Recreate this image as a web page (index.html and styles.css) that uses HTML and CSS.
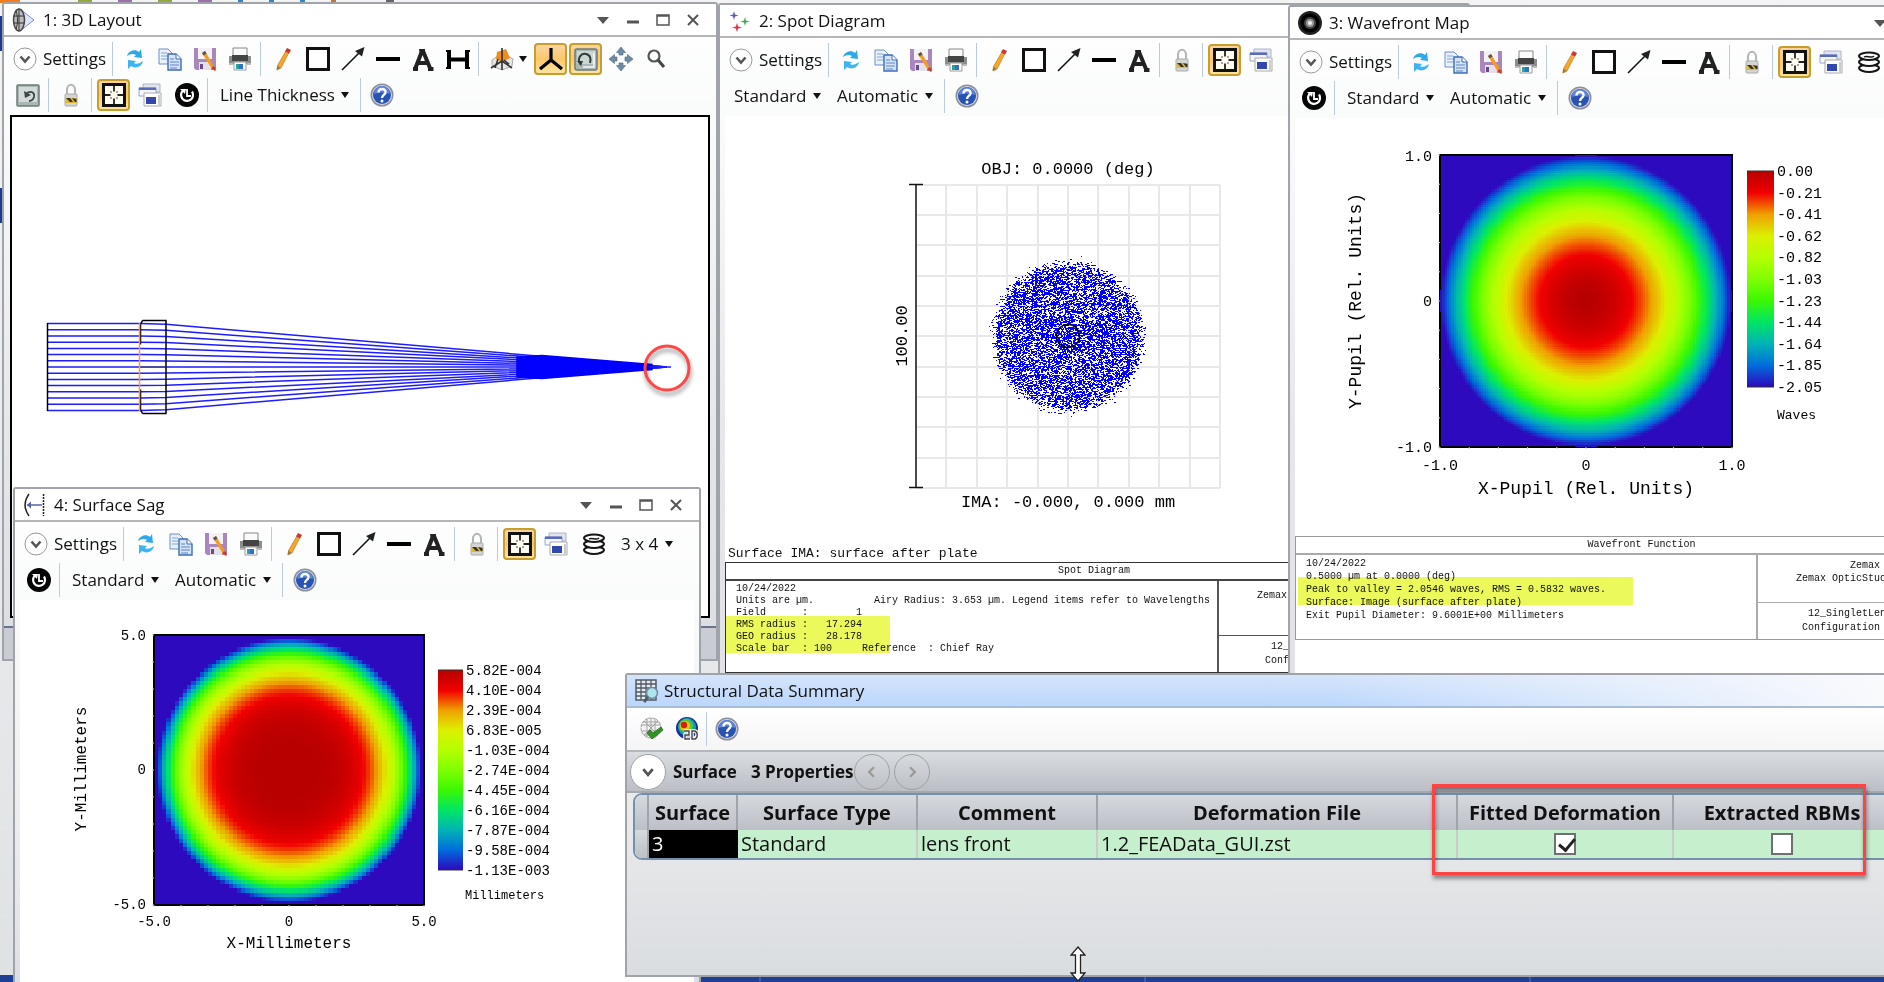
FILE: index.html
```html
<!DOCTYPE html>
<html lang="en">
<head>
    <meta charset="UTF-8">
    <title>OpticStudio</title>
    <link rel="stylesheet" href="styles.css">
</head>
<body>
<svg class="sprite" aria-hidden="true">
    <symbol id="i-chevron" viewBox="0 0 24 24"><circle cx="12" cy="12" r="11" fill="#fff" stroke="#999"/><path d="M7.5 9.5l4.5 5 4.5-5" fill="none" stroke="#555" stroke-width="2.6"/></symbol>
    <symbol id="i-refresh" viewBox="0 0 24 24"><path d="M4 9c1-5 8-8 12-4l2-3 1 9-8-1 2-2c-3-2-6-1-9 1z" fill="#2fa8ea"/><path d="M20 14c-1 6-8 8-12 5l-3 3V13l8 1-2 2c3 2 6 0 9-2z" fill="#3db5f2"/></symbol>
    <symbol id="i-copy" viewBox="0 0 24 24"><path d="M1 2h9l4 4v11H1z" fill="#eaf1fb" stroke="#6b8fc9"/><path d="M3 6h6M3 9h8M3 12h8" stroke="#7ea3d8"/><path d="M10 7h8l5 5v11H10z" fill="#d5e4f8" stroke="#3d6cb5" stroke-width="1.4"/><path d="M18 7v5h5" fill="#fff" stroke="#3d6cb5"/><path d="M12 12h4M12 15h9M12 18h9M12 21h7" stroke="#5a86c8"/></symbol>
    <symbol id="i-save" viewBox="0 0 24 24"><path d="M1 1h22v22H3l-2-2z" fill="#a987bd"/><path d="M5 1h14v11H5z" fill="#f3f1f6"/><path d="M6 15h12v8H6z" fill="#e4e0ea"/><path d="M7 17h3v5H7z" fill="#6b4a86"/><path d="M9 6l3-2 10 17v3l-3-2z" fill="#f59a22"/><path d="M9 6l3-2 1.500 2.500-3 2z" fill="#555"/><path d="M20 19l2.500 1.500v3.500l-4-2.500z" fill="#cf3a2c"/></symbol>
    <symbol id="i-print" viewBox="0 0 24 24"><path d="M5 1h14v9H5z" fill="#fafafa" stroke="#888"/><path d="M1 9h22v8H1z" fill="#8b8d8f"/><path d="M4 8h16v6H4z" fill="#444"/><path d="M6 15h12v8H6z" fill="#fff" stroke="#999"/><path d="M8 17h3v5H8z" fill="#2aa39c"/><path d="M11 17h4v5h-4z" fill="#2f6fd0"/><path d="M1 16h4v2H1zM19 16h4v2h-4z" fill="#bbb"/></symbol>
    <symbol id="i-pencil" viewBox="0 0 24 24"><path d="M16 2l3 1.500-9 17.500-4 2 .5-4.500z" fill="#f5a62c" stroke="#c77d17" stroke-width=".7"/><path d="M16 1l4 2-2 3.500-4-2z" fill="#cc3b33"/><path d="M6.500 18.500l3 2.500-4 2z" fill="#8d7a5a"/></symbol>
    <symbol id="i-rect" viewBox="0 0 24 24"><path d="M1.500 1.500h21v21h-21z" fill="#fff" stroke="#111" stroke-width="3"/></symbol>
    <symbol id="i-arrow" viewBox="0 0 24 24"><path d="M1 23L19 5" stroke="#111" stroke-width="1.600"/><path d="M23.500 0l-2.500 9.500-7-5.500z" fill="#222"/></symbol>
    <symbol id="i-line" viewBox="0 0 24 24"><path d="M0 12h24" stroke="#000" stroke-width="4"/></symbol>
    <symbol id="i-letter" viewBox="0 0 24 24"><path d="M2 22h5M17 22h5.500M4.500 21L11 4M12 4l7 17M7.500 16h9" stroke="#222" stroke-width="4" fill="none"/><path d="M8 2h6v5H9z" fill="#222"/></symbol>
    <symbol id="i-span" viewBox="0 0 24 24"><path d="M3 3v19M21 3v19M3 12.500h18" stroke="#000" stroke-width="4"/><path d="M0 4h5M0 21h5M19 4h5M19 21h5" stroke="#000" stroke-width="2"/></symbol>
    <symbol id="i-camera" viewBox="0 0 24 24"><path d="M2 13l10-7 11 6-1 7-10 4-10-4z" fill="#e6e6e6" stroke="#aaa"/><path d="M7 5l9-3 4 9-8 4-6-3z" fill="#ee8c1e"/><path d="M12 1v13M12 14L1 21M12 14l10 7M8 12l-3 9M14 13l5 4M12 14v9" stroke="#333" stroke-width="1.600" fill="none"/></symbol>
    <symbol id="i-axes" viewBox="0 0 24 24"><path d="M12 1v12M12 13L1 22M12 13l11 9" stroke="#000" stroke-width="3.200" fill="none"/></symbol>
    <symbol id="i-orbit" viewBox="0 0 24 24"><rect x="1" y="2" width="22" height="21" rx="2" fill="#a9b7b5" stroke="#6d7b7a" stroke-width="1.500"/><path d="M3 4h18v13H3z" fill="#cbd5d2"/><path d="M6 17C3 11 7 6 12 7c5 1 5 6 4 9" fill="none" stroke="#2e3c3b" stroke-width="2"/><path d="M20 6v14H9" stroke="#f6f8f8" stroke-width="1.500" fill="none"/><path d="M3 14l4 5 2-5z" fill="#2e3c3b"/></symbol>
    <symbol id="i-undo" viewBox="0 0 24 24"><rect x="1" y="2" width="22" height="21" rx="1" fill="#a9b7b5" stroke="#6d7b7a" stroke-width="1.500"/><path d="M3 4h18v15H3z" fill="#d3dbd8"/><path d="M10 11c4-4 9-2 8 3-1 3-3 4-5 4" fill="none" stroke="#394645" stroke-width="1.800"/><path d="M8 8l1 7 6-3z" fill="#394645"/></symbol>
    <symbol id="i-move" viewBox="0 0 24 24"><g fill="#6d8ba3" stroke="#4d6a82" stroke-width=".6"><path d="M12 0l4.500 5.500H14v2.500h-4V5.500H7.500z"/><path d="M12 24l4.500-5.500H14V16h-4v2.500H7.500z"/><path d="M0 12l5.500-4.500V10H8v4H5.500v2.500z"/><path d="M24 12l-5.500-4.500V10H16v4h2.500v2.500z"/></g></symbol>
    <symbol id="i-zoom" viewBox="0 0 24 24"><circle cx="10" cy="9" r="5.500" fill="none" stroke="#555" stroke-width="2.200"/><path d="M14 13l6 7" stroke="#444" stroke-width="3"/></symbol>
    <symbol id="i-lock" viewBox="0 0 24 24"><path d="M8 12V7c0-7 8-7 8 0v5" fill="none" stroke="#b5b5b5" stroke-width="2"/><rect x="6" y="11" width="12" height="12" rx="1" fill="#d4d4d0" stroke="#aaa"/><path d="M6.500 15h11v5h-11z" fill="#e0b92e"/><path d="M7 15l4 4h3l-3-4zM13 15l3 4h1.500v-3z" fill="#333"/></symbol>
    <symbol id="i-fit" viewBox="0 0 24 24"><path d="M1.500 1.500h21v21h-21z" fill="#fdfaf0" stroke="#111" stroke-width="3"/><path d="M12 3v5.500M12 15.500V21M3 12h5.500M15.500 12H21" stroke="#222" stroke-width="1.800"/><path d="M8 8h2v2H8zM14 8h2v2h-2zM8 14h2v2H8zM14 14h2v2h-2z" fill="#aaa59a"/></symbol>
    <symbol id="i-windows" viewBox="0 0 24 24"><path d="M5 1h17v8H5z" fill="#e1e4ec" stroke="#aeb6c8"/><path d="M1 5h17v8H1z" fill="#f5f6f9" stroke="#9aa6c8"/><path d="M1 4.500h17v2.500H1z" fill="#5a6bbc"/><path d="M6 10h17v13H6z" fill="#fff" stroke="#aaa"/><path d="M8 14h10v7H8z" fill="#3348ae"/><path d="M20 12h2v10h-2z" fill="#ccc"/></symbol>
    <symbol id="i-clock" viewBox="0 0 24 24"><circle cx="12" cy="12" r="12" fill="#050505"/><path d="M8 7.500a6 6 0 1 0 9 1" fill="none" stroke="#fff" stroke-width="2.200"/><path d="M12 6v7h4" stroke="#fff" stroke-width="1.800" fill="none"/><path d="M5 6l6 0-1 5z" fill="#fff"/></symbol>
    <symbol id="i-layers" viewBox="0 0 24 24"><g fill="#fff" stroke="#151515" stroke-width="2"><path d="M12 14.500c5 0 10 1.500 10 3.500s-5 4-10 4-10-2-10-4 5-3.500 10-3.500z"/><path d="M12 8.500c5 0 10 1.500 10 3.500s-5 4-10 4-10-2-10-4 5-3.500 10-3.500z"/><path d="M12 2.500c5 0 10 1.500 10 3.500s-5 4-10 4S2 8 2 6s5-3.500 10-3.500z"/></g><path d="M7 7c3-2 7 2 10-1" fill="none" stroke="#151515" stroke-width="1.500"/></symbol>
    <symbol id="i-help" viewBox="0 0 24 24"><circle cx="12" cy="12" r="11.500" fill="#8b8f99"/><circle cx="12" cy="12" r="10" fill="#d4d9e4"/><circle cx="12" cy="12" r="9" fill="#2853b5"/><path d="M4 11a8 8 0 0 1 16 0c-5-2-10-2-16 0z" fill="#5f86d8"/><path d="M8.500 9.500c0-5 7.500-4.500 7 0-.4 2.500-3.500 2.500-3.500 5.500" fill="none" stroke="#fff" stroke-width="2.400"/><circle cx="12" cy="18" r="1.500" fill="#fff"/></symbol>
    <symbol id="i-lens" viewBox="0 0 24 24"><path d="M8 1l14 11L8 23z" fill="#dfe6fa" stroke="#7c8cd6"/><ellipse cx="7" cy="12" rx="5.500" ry="11" fill="#bdbdbd" stroke="#444" stroke-width="1.500"/><path d="M7 1v22M2 8h10M2 15h10M4 3c2 6 2 12 0 18" stroke="#333" fill="none"/></symbol>
    <symbol id="i-spots" viewBox="0 0 24 24"><path d="M6 2l1 3.500 3.500 1-3.500 1L6 11 5 7.500l-3.500-1 3.500-1z" fill="#5560ad"/><path d="M17 8l1 3.500 3.500 1-3.500 1-1 3.500-1-3.500-3.500-1 3.500-1z" fill="#3cae55"/><path d="M9 14l1.200 3.500 3.800 1-3.800 1L9 23l-1.200-3.500-3.800-1 3.800-1z" fill="#e8344a"/></symbol>
    <symbol id="i-wave" viewBox="0 0 24 24"><circle cx="12" cy="12" r="12" fill="#222"/><circle cx="12" cy="12" r="9.500" fill="#000"/><circle cx="12" cy="12" r="6" fill="#444"/><circle cx="12" cy="12" r="4" fill="#999"/><circle cx="12" cy="12" r="2" fill="#eee"/></symbol>
    <symbol id="i-sag" viewBox="0 0 24 24"><path d="M6 1c-5 7-5 15 0 22" fill="none" stroke="#222" stroke-width="1.500"/><path d="M4 12h15" stroke="#5661b0" stroke-width="1.500"/><path d="M8 8.500L4 12l4 3.500" fill="#5661b0"/><path d="M20.500 1v22" stroke="#222" stroke-width="1.500" stroke-dasharray="2 1"/></symbol>
    <symbol id="i-sheet" viewBox="0 0 24 24"><path d="M1 1h20v20H1z" fill="#e7ebf0" stroke="#4f5a66" stroke-width="1.500"/><path d="M1 5h20M1 9h20M1 13h20M1 17h20M6 1v20M11 1v20M16 1v20" stroke="#4f5a66" stroke-width="1.300"/><circle cx="17" cy="14" r="5.500" fill="#aee3f0" stroke="#6f8c9c" stroke-width="1.500"/><path d="M13 18l-4 5" stroke="#49606e" stroke-width="3"/></symbol>
    <symbol id="i-mesh" viewBox="0 0 24 24"><circle cx="11" cy="11" r="10" fill="#f2f2f2" stroke="#999" stroke-dasharray="3 1"/><path d="M1 8h20M1 14h20M3 5h16M4 18h14M7 1v20M15 1v20M11 1v20M4 4l14 14M18 4L4 18" stroke="#a5a5a5" fill="none"/><path d="M7 16l5 6 11-9-2-3-8 6-3-3z" fill="#2f9422" stroke="#15610f" stroke-width=".7"/></symbol>
    <symbol id="i-map2d" viewBox="0 0 24 24"><circle cx="12" cy="11" r="11" fill="#1c2e9c"/><circle cx="12" cy="10" r="9" fill="#11a0b8"/><circle cx="11" cy="9" r="7" fill="#59c929"/><circle cx="10" cy="9" r="5" fill="#efc213"/><circle cx="9" cy="8" r="3.200" fill="#c8260e"/><path d="M9 14h5v4h-4v4h5M17 14v8h3c3-1 3-7 0-8z" fill="none" stroke="#fff" stroke-width="3.500"/><path d="M9 14h5v4h-4v4h5M17 14v8h3c3-1 3-7 0-8z" fill="none" stroke="#444" stroke-width="1.400"/></symbol>
</svg>

<main class="desktop">
    <div class="ribbon" aria-hidden="true"><i class="file"></i><i class="green"></i><i class="purple"></i><i class="green"></i><i class="purple"></i><i class="blue"></i><i class="blue"></i><i class="blue"></i><i class="orange"></i><i class="grey"></i></div>
    <div class="edge" aria-hidden="true"></div>
    <div class="edge lower" aria-hidden="true"></div>
    <div class="footer" aria-hidden="true"><i></i><i></i><i></i></div>

    <!-- 1: layout -->
    <section class="window win-layout">
        <header class="titlebar">
            <svg class="icon"><use href="#i-lens"/></svg>
            <h2>1: 3D Layout</h2>
            <button class="ctl" aria-label="Window menu"><svg viewBox="0 0 16 16"><path d="M2 5h12l-6 7z" fill="#555"/></svg></button>
            <button class="ctl" aria-label="Minimize"><svg viewBox="0 0 16 16"><path d="M2 10h12" stroke="#555" stroke-width="3"/></svg></button>
            <button class="ctl" aria-label="Maximize"><svg viewBox="0 0 16 16"><path d="M2 3h12v10H2zM2 4h12" fill="none" stroke="#555" stroke-width="1.500"/></svg></button>
            <button class="ctl" aria-label="Close"><svg viewBox="0 0 16 16"><path d="M3 3l10 10M13 3L3 13" stroke="#555" stroke-width="2"/></svg></button>
        </header>
        <div class="toolbar">
            <div class="row">
                <button class="settings"><svg class="icon"><use href="#i-chevron"/></svg>Settings</button>
                <span class="sep"></span>
                <button class="tool" aria-label="Refresh"><svg class="icon"><use href="#i-refresh"/></svg></button>
                <button class="tool" aria-label="Copy"><svg class="icon"><use href="#i-copy"/></svg></button>
                <button class="tool" aria-label="Save"><svg class="icon"><use href="#i-save"/></svg></button>
                <button class="tool" aria-label="Print"><svg class="icon"><use href="#i-print"/></svg></button>
                <span class="sep"></span>
                <button class="tool" aria-label="Annotate"><svg class="icon"><use href="#i-pencil"/></svg></button>
                <button class="tool" aria-label="Rectangle"><svg class="icon"><use href="#i-rect"/></svg></button>
                <button class="tool" aria-label="Arrow"><svg class="icon"><use href="#i-arrow"/></svg></button>
                <button class="tool" aria-label="Line"><svg class="icon"><use href="#i-line"/></svg></button>
                <button class="tool" aria-label="Text"><svg class="icon"><use href="#i-letter"/></svg></button>
                <button class="tool" aria-label="Measure"><svg class="icon"><use href="#i-span"/></svg></button>
                <span class="sep"></span>
                <button class="tool split" aria-label="View plane"><svg class="icon"><use href="#i-camera"/></svg><b class="caret"></b></button>
                <button class="tool on" aria-label="Show axes"><svg class="icon"><use href="#i-axes"/></svg></button>
                <button class="tool on" aria-label="Rotate"><svg class="icon"><use href="#i-orbit"/></svg></button>
                <button class="tool" aria-label="Pan"><svg class="icon"><use href="#i-move"/></svg></button>
                <button class="tool" aria-label="Zoom"><svg class="icon"><use href="#i-zoom"/></svg></button>
            </div>
            <div class="row">
                <button class="tool" aria-label="Reset view"><svg class="icon"><use href="#i-undo"/></svg></button>
                <span class="sep"></span>
                <button class="tool" aria-label="Lock"><svg class="icon"><use href="#i-lock"/></svg></button>
                <span class="sep"></span>
                <button class="tool on" aria-label="Fit"><svg class="icon"><use href="#i-fit"/></svg></button>
                <button class="tool wide" aria-label="Clone"><svg class="icon"><use href="#i-windows"/></svg></button>
                <button class="tool" aria-label="Auto update"><svg class="icon"><use href="#i-clock"/></svg></button>
                <span class="sep"></span>
                <button class="menu">Line Thickness<b class="caret"></b></button>
                <span class="sep"></span>
                <button class="tool" aria-label="Help"><svg class="icon"><use href="#i-help"/></svg></button>
            </div>
        </div>
        <div class="view framed">
            <svg class="plot" width="696" height="499">
                <g id="rays" fill="none" stroke="#1c1cff" stroke-width="1.500"></g>
                <path d="M35.500 206v88" stroke="#000" stroke-width="1.500"/>
                <path d="M130.500 203.500h23.500v93h-23.500M154 203v94M130.500 203.500l-2 4v20M130.500 296.500l-2-4v-20" fill="none" stroke="#000" stroke-width="1.500"/>
                <path d="M127 250h27" stroke="#444"/>
                <path d="M127.500 206v88" stroke="#ff9640" stroke-width="1.500"/>
                <circle class="callout" cx="655" cy="251" r="22"/>
            </svg>
        </div>
        <div class="status"></div>
    </section>

    <!-- 2: spot diagram -->
    <section class="window win-spot">
        <header class="titlebar">
            <svg class="icon"><use href="#i-spots"/></svg>
            <h2>2: Spot Diagram</h2>
        </header>
        <div class="toolbar">
            <div class="row">
                <button class="settings"><svg class="icon"><use href="#i-chevron"/></svg>Settings</button>
                <span class="sep"></span>
                <button class="tool" aria-label="Refresh"><svg class="icon"><use href="#i-refresh"/></svg></button>
                <button class="tool" aria-label="Copy"><svg class="icon"><use href="#i-copy"/></svg></button>
                <button class="tool" aria-label="Save"><svg class="icon"><use href="#i-save"/></svg></button>
                <button class="tool" aria-label="Print"><svg class="icon"><use href="#i-print"/></svg></button>
                <span class="sep"></span>
                <button class="tool" aria-label="Annotate"><svg class="icon"><use href="#i-pencil"/></svg></button>
                <button class="tool" aria-label="Rectangle"><svg class="icon"><use href="#i-rect"/></svg></button>
                <button class="tool" aria-label="Arrow"><svg class="icon"><use href="#i-arrow"/></svg></button>
                <button class="tool" aria-label="Line"><svg class="icon"><use href="#i-line"/></svg></button>
                <button class="tool" aria-label="Text"><svg class="icon"><use href="#i-letter"/></svg></button>
                <span class="sep"></span>
                <button class="tool" aria-label="Lock"><svg class="icon"><use href="#i-lock"/></svg></button>
                <span class="sep"></span>
                <button class="tool on" aria-label="Fit"><svg class="icon"><use href="#i-fit"/></svg></button>
                <button class="tool wide" aria-label="Clone"><svg class="icon"><use href="#i-windows"/></svg></button>
            </div>
            <div class="row">
                <label class="menu"><select aria-label="Style"><option>Standard</option></select><b class="caret"></b></label>
                <label class="menu"><select aria-label="Scale"><option>Automatic</option></select><b class="caret"></b></label>
                <span class="sep"></span>
                <button class="tool" aria-label="Help"><svg class="icon"><use href="#i-help"/></svg></button>
            </div>
        </div>
        <div class="view">
            <svg class="plot" width="738" height="430">
                <path d="M191 69h304M191 99h304M191 129h304M191 160h304M191 190h304M191 220h304M191 251h304M191 281h304M191 311h304M191 342h304M191 372h304M221 69v303M252 69v303M282 69v303M313 69v303M343 69v303M373 69v303M404 69v303M434 69v303M465 69v303M495 69v303" fill="none" stroke="#e8e8e8" stroke-width="2"/>
                <path d="M191 68v304M184 68.500h14M184 371.500h14" fill="none" stroke="#111" stroke-width="1.500"/>
                <path id="spots" fill="#00f" shape-rendering="crispEdges"/>
                <circle cx="343" cy="220" r="11.500" fill="none" stroke="#000" stroke-width="1.500"/>
                <g class="t17" text-anchor="middle">
                    <text x="343" y="58">OBJ: 0.0000 (deg)</text>
                    <text x="343" y="391">IMA: -0.000, 0.000 mm</text>
                    <text transform="translate(182 220) rotate(-90)">100.00</text>
                </g>
            </svg>
            <p class="surface">Surface IMA: surface after plate</p>
            <div class="report spot">
                <h3>Spot Diagram</h3>
                <pre class="left">10/24/2022
Units are µm.          Airy Radius: 3.653 µm. Legend items refer to Wavelengths
Field      :        1
RMS radius :   17.294
GEO radius :   28.178
Scale bar  : 100     Reference  : Chief Ray</pre>
                <pre class="top">
Zemax</pre>
                <pre class="bottom"> 12_
Conf</pre>
                <span class="marker"></span>
            </div>
        </div>
    </section>

    <!-- 3: wavefront map -->
    <section class="window win-wave">
        <header class="titlebar">
            <svg class="icon"><use href="#i-wave"/></svg>
            <h2>3: Wavefront Map</h2>
            <button class="ctl" aria-label="Window menu"><svg viewBox="0 0 16 16"><path d="M2 5h12l-6 7z" fill="#555"/></svg></button>
            <span class="ctl"></span><span class="ctl"></span><span class="ctl"></span>
        </header>
        <div class="toolbar">
            <div class="row">
                <button class="settings"><svg class="icon"><use href="#i-chevron"/></svg>Settings</button>
                <span class="sep"></span>
                <button class="tool" aria-label="Refresh"><svg class="icon"><use href="#i-refresh"/></svg></button>
                <button class="tool" aria-label="Copy"><svg class="icon"><use href="#i-copy"/></svg></button>
                <button class="tool" aria-label="Save"><svg class="icon"><use href="#i-save"/></svg></button>
                <button class="tool" aria-label="Print"><svg class="icon"><use href="#i-print"/></svg></button>
                <span class="sep"></span>
                <button class="tool" aria-label="Annotate"><svg class="icon"><use href="#i-pencil"/></svg></button>
                <button class="tool" aria-label="Rectangle"><svg class="icon"><use href="#i-rect"/></svg></button>
                <button class="tool" aria-label="Arrow"><svg class="icon"><use href="#i-arrow"/></svg></button>
                <button class="tool" aria-label="Line"><svg class="icon"><use href="#i-line"/></svg></button>
                <button class="tool" aria-label="Text"><svg class="icon"><use href="#i-letter"/></svg></button>
                <span class="sep"></span>
                <button class="tool" aria-label="Lock"><svg class="icon"><use href="#i-lock"/></svg></button>
                <span class="sep"></span>
                <button class="tool on" aria-label="Fit"><svg class="icon"><use href="#i-fit"/></svg></button>
                <button class="tool wide" aria-label="Clone"><svg class="icon"><use href="#i-windows"/></svg></button>
                <button class="tool wide" aria-label="Layers"><svg class="icon"><use href="#i-layers"/></svg></button>
            </div>
            <div class="row">
                <button class="tool" aria-label="Auto update"><svg class="icon"><use href="#i-clock"/></svg></button>
                <span class="sep"></span>
                <label class="menu"><select aria-label="Style"><option>Standard</option></select><b class="caret"></b></label>
                <label class="menu"><select aria-label="Scale"><option>Automatic</option></select><b class="caret"></b></label>
                <span class="sep"></span>
                <button class="tool" aria-label="Help"><svg class="icon"><use href="#i-help"/></svg></button>
            </div>
        </div>
        <div class="view">
            <svg class="plot" width="692" height="418">
                <g id="waveMap"></g>
                <g id="waveBar" class="t15"></g>
                <g class="t15" text-anchor="end">
                    <text x="137" y="43">1.0</text>
                    <text x="137" y="188">0</text>
                    <text x="137" y="334">-1.0</text>
                </g>
                <g class="t15" text-anchor="middle">
                    <text x="145" y="352">-1.0</text>
                    <text x="291" y="352">0</text>
                    <text x="437" y="352">1.0</text>
                </g>
                <g class="t18" text-anchor="middle">
                    <text x="291" y="376">X-Pupil (Rel. Units)</text>
                    <text transform="translate(66 183) rotate(-90)">Y-Pupil (Rel. Units)</text>
                </g>
                <text class="t13" x="482" y="301">Waves</text>
            </svg>
            <div class="report wave">
                <h3>Wavefront Function</h3>
                <pre class="left">10/24/2022
0.5000 µm at 0.0000 (deg)
Peak to valley = 2.0546 waves, RMS = 0.5832 waves.
Surface: Image (surface after plate)
Exit Pupil Diameter: 9.6001E+00 Millimeters</pre>
                <pre class="top">         Zemax
Zemax OpticStudio</pre>
                <pre class="bottom"> 12_SingletLens
Configuration 1 of 1</pre>
                <span class="marker"></span>
            </div>
        </div>
    </section>

    <!-- 4: surface sag -->
    <section class="window win-sag">
        <header class="titlebar">
            <svg class="icon"><use href="#i-sag"/></svg>
            <h2>4: Surface Sag</h2>
            <button class="ctl" aria-label="Window menu"><svg viewBox="0 0 16 16"><path d="M2 5h12l-6 7z" fill="#555"/></svg></button>
            <button class="ctl" aria-label="Minimize"><svg viewBox="0 0 16 16"><path d="M2 10h12" stroke="#555" stroke-width="3"/></svg></button>
            <button class="ctl" aria-label="Maximize"><svg viewBox="0 0 16 16"><path d="M2 3h12v10H2zM2 4h12" fill="none" stroke="#555" stroke-width="1.500"/></svg></button>
            <button class="ctl" aria-label="Close"><svg viewBox="0 0 16 16"><path d="M3 3l10 10M13 3L3 13" stroke="#555" stroke-width="2"/></svg></button>
        </header>
        <div class="toolbar">
            <div class="row">
                <button class="settings"><svg class="icon"><use href="#i-chevron"/></svg>Settings</button>
                <span class="sep"></span>
                <button class="tool" aria-label="Refresh"><svg class="icon"><use href="#i-refresh"/></svg></button>
                <button class="tool" aria-label="Copy"><svg class="icon"><use href="#i-copy"/></svg></button>
                <button class="tool" aria-label="Save"><svg class="icon"><use href="#i-save"/></svg></button>
                <button class="tool" aria-label="Print"><svg class="icon"><use href="#i-print"/></svg></button>
                <span class="sep"></span>
                <button class="tool" aria-label="Annotate"><svg class="icon"><use href="#i-pencil"/></svg></button>
                <button class="tool" aria-label="Rectangle"><svg class="icon"><use href="#i-rect"/></svg></button>
                <button class="tool" aria-label="Arrow"><svg class="icon"><use href="#i-arrow"/></svg></button>
                <button class="tool" aria-label="Line"><svg class="icon"><use href="#i-line"/></svg></button>
                <button class="tool" aria-label="Text"><svg class="icon"><use href="#i-letter"/></svg></button>
                <span class="sep"></span>
                <button class="tool" aria-label="Lock"><svg class="icon"><use href="#i-lock"/></svg></button>
                <span class="sep"></span>
                <button class="tool on" aria-label="Fit"><svg class="icon"><use href="#i-fit"/></svg></button>
                <button class="tool wide" aria-label="Clone"><svg class="icon"><use href="#i-windows"/></svg></button>
                <button class="tool wide" aria-label="Layers"><svg class="icon"><use href="#i-layers"/></svg></button>
                <label class="menu"><select aria-label="Grid"><option>3 x 4</option></select><b class="caret"></b></label>
            </div>
            <div class="row">
                <button class="tool" aria-label="Auto update"><svg class="icon"><use href="#i-clock"/></svg></button>
                <span class="sep"></span>
                <label class="menu"><select aria-label="Style"><option>Standard</option></select><b class="caret"></b></label>
                <label class="menu"><select aria-label="Scale"><option>Automatic</option></select><b class="caret"></b></label>
                <span class="sep"></span>
                <button class="tool" aria-label="Help"><svg class="icon"><use href="#i-help"/></svg></button>
            </div>
        </div>
        <div class="view">
            <svg class="plot" width="672" height="382">
                <g id="sagMap"></g>
                <g id="sagBar" class="t14"></g>
                <g class="t14" text-anchor="end">
                    <text x="126" y="40">5.0</text>
                    <text x="126" y="174">0</text>
                    <text x="126" y="309">-5.0</text>
                </g>
                <g class="t14" text-anchor="middle">
                    <text x="134" y="326">-5.0</text>
                    <text x="269" y="326">0</text>
                    <text x="404" y="326">5.0</text>
                </g>
                <g class="t16" text-anchor="middle">
                    <text x="269" y="348">X-Millimeters</text>
                    <text transform="translate(66 169) rotate(-90)">Y-Millimeters</text>
                </g>
                <text class="t12" x="445" y="299">Millimeters</text>
            </svg>
        </div>
    </section>

    <!-- structural data -->
    <section class="window win-data">
        <header class="titlebar">
            <svg class="icon"><use href="#i-sheet"/></svg>
            <h2>Structural Data Summary</h2>
        </header>
        <div class="databar">
            <button class="tool" aria-label="Check mesh"><svg class="icon"><use href="#i-mesh"/></svg></button>
            <button class="tool" aria-label="2D map"><svg class="icon"><use href="#i-map2d"/></svg></button>
            <span class="sep"></span>
            <button class="tool" aria-label="Help"><svg class="icon"><use href="#i-help"/></svg></button>
        </div>
        <div class="props">
            <button class="round open" aria-label="Expand"><svg viewBox="0 0 36 36"><path d="M13 15l5 6 5-6" fill="none" stroke="#555" stroke-width="3"/></svg></button>
            <strong>Surface</strong>
            <strong>3 Properties</strong>
            <button class="round" aria-label="Previous"><svg viewBox="0 0 36 36"><path d="M20 13l-5 5 5 5" fill="none" stroke="#999" stroke-width="2.500"/></svg></button>
            <button class="round" aria-label="Next"><svg viewBox="0 0 36 36"><path d="M16 13l5 5-5 5" fill="none" stroke="#999" stroke-width="2.500"/></svg></button>
        </div>
        <div class="grid">
            <table>
                <colgroup><col class="c-head"><col class="c-num"><col class="c-mid"><col class="c-mid"><col><col class="c-check"><col class="c-check"></colgroup>
                <thead>
                <tr><th></th><th>Surface</th><th>Surface Type</th><th>Comment</th><th>Deformation File</th><th>Fitted Deformation</th><th>Extracted RBMs</th></tr>
                </thead>
                <tbody>
                <tr>
                    <th></th>
                    <td class="current">3</td>
                    <td>Standard</td>
                    <td>lens front</td>
                    <td>1.2_FEAData_GUI.zst</td>
                    <td class="check"><input type="checkbox" aria-label="Fitted Deformation" checked></td>
                    <td class="check"><input type="checkbox" aria-label="Extracted RBMs"></td>
                </tr>
                </tbody>
            </table>
            <span class="highlight"></span>
        </div>
    </section>

    <svg class="cursor" viewBox="0 0 16 36" aria-hidden="true"><path d="M8 1l7 8h-4.500v18H15l-7 8-7-8h4.500V9H1z" fill="#fff" stroke="#222" stroke-width="1.300"/></svg>
</main>
<script src="plots.js"></script>
</body>
</html>
```
FILE: styles.css
```css
*{
    box-sizing:border-box;
    margin:0;
    padding:0;
}
body{
    font:17px/20px "Open Sans","Noto Sans",sans-serif;
    color:#111;
    overflow:hidden;
}
button,select{
    font:inherit;
    color:inherit;
    background:none;
    border:0;
}
.sprite{
    position:absolute;
    width:0;
    height:0;
}
.icon{
    width:24px;
    height:24px;
    flex:none;
}

/* desktop */
.desktop{
    position:relative;
    height:100vh;
    overflow:hidden;
    background:linear-gradient(#f3f3f4,#e8e9eb 60%,#dfe2e5);
}
.ribbon{
    display:flex;
    gap:26px;
    height:3px;
}
.ribbon i{
    width:14px;
}
.ribbon .file{
    width:20px;
    margin-right:32px;
    background:#f57c1c;
}
.ribbon .green{
    background:#8fae3a;
}
.ribbon .purple{
    background:#9a6fb0;
}
.ribbon .blue{
    width:5px;
    background:#2c86c8;
}
.ribbon .orange{
    width:5px;
    background:#c5753c;
}
.ribbon .grey{
    width:8px;
    margin-left:24px;
    background:#666;
}
.edge{
    width:3px;
    height:35px;
    margin-top:13px;
    background:#1c3a94;
}
.edge.lower{
    margin-top:137px;
}
.footer{
    position:absolute;
    left:0;
    right:0;
    bottom:0;
    height:7px;
    display:flex;
    background:#1f3f94;
}
.footer i{
    width:385px;
    border-right:2px solid #3d5ca8;
}
.footer i:first-child{
    width:761px;
}

/* windows */
.window{
    position:absolute;
    display:flex;
    flex-direction:column;
    border:2px solid #a0a3a9;
    border-radius:3px 3px 0 0;
    background:linear-gradient(#fff,#fafbfb 110px,#e6e7eb 420px,#dadde1);
}
.win-layout{
    left:2px;
    top:2px;
    width:716px;
    height:659px;
}
.win-spot{
    left:718px;
    top:3px;
    width:752px;
    bottom:7px;
}
.win-wave{
    left:1288px;
    top:5px;
    width:707px;
    bottom:7px;
}
.win-sag{
    left:13px;
    top:487px;
    width:688px;
    bottom:-8px;
}
.win-data{
    left:625px;
    right:-16px;
    top:673px;
    bottom:5px;
    background:linear-gradient(#f0f0f2,#e8e9eb 50%,#dadde0);
}
.titlebar{
    display:flex;
    align-items:center;
    height:33px;
    padding:0 8px;
    border-bottom:2px solid #b4b6ba;
    background:#fff;
}
.titlebar h2{
    flex:1;
    margin-left:7px;
    font-size:17px;
    font-weight:400;
    line-height:24px;
}
.ctl{
    display:flex;
    justify-content:center;
    width:30px;
}
.ctl svg{
    width:16px;
    height:16px;
}

/* toolbars */
.toolbar{
    padding:4px 5px 2px 6px;
}
.row{
    display:flex;
    align-items:center;
    height:36px;
}
.settings{
    display:flex;
    align-items:center;
    gap:6px;
    width:99px;
    padding-left:3px;
}
.sep{
    width:1px;
    height:34px;
    margin:0 4px 0 3px;
    background:#b9cbdc;
}
.tool{
    display:flex;
    align-items:center;
    justify-content:center;
    width:33px;
    height:32px;
    margin:0 1px;
    flex:none;
}
.tool.wide{
    width:36px;
}
.tool.split{
    gap:5px;
    width:48px;
}
.tool.on{
    border:2px solid #c79d2e;
    border-radius:4px;
    background:linear-gradient(#f9d3a0,#fbc76c 50%,#fde3a0);
}
.menu{
    display:flex;
    align-items:center;
    gap:6px;
    padding:0 8px;
}
.menu select{
    appearance:none;
}
.caret{
    border:4px solid transparent;
    border-top:6px solid #111;
    border-bottom:0;
}

/* plots */
.view{
    flex:1;
    margin:0 5px;
    background:#fff;
    overflow:hidden;
}
.view.framed{
    flex:none;
    margin:0 6px 8px;
    border:2px solid #000;
}
.status{
    flex:1;
    border-top:2px solid #6a738c;
    background:#c9ccd2;
}
.plot{
    display:block;
}
.plot text,.report,.surface{
    font-family:"Liberation Mono",monospace;
}
.t12{
    font-size:12px;
}
.t13{
    font-size:13px;
}
.t14{
    font-size:14px;
}
.t15{
    font-size:15px;
}
.t16{
    font-size:16px;
}
.t17{
    font-size:17px;
}
.t18{
    font-size:18px;
}
.callout{
    fill:none;
    stroke:#ff4747;
    stroke-width:3px;
    filter:drop-shadow(1px 4px 2px rgba(0,0,0,.4));
}
.surface{
    padding-left:3px;
    font-size:13px;
    line-height:16px;
}
.report{
    position:relative;
    display:grid;
    grid-template-rows:auto 1fr auto;
    font-size:10px;
    border:1px solid #333;
}
.report pre{
    font:inherit;
}
.report h3{
    grid-column:1 / 3;
    font-size:10px;
    font-weight:400;
    line-height:16px;
    text-align:center;
    border-bottom:2px solid #444;
}
.report .left{
    grid-row:2 / 4;
    padding:2px 10px;
    border-right:2px solid #555;
}
.report .top{
    border-bottom:1px solid #555;
}
.report .top,.report .bottom{
    padding:4px 38px;
}
.report.spot{
    grid-template-columns:493px 1fr;
    height:111px;
    line-height:12px;
}
.report.spot .bottom{
    padding-left:46px;
    line-height:14px;
}
.report.spot .top{
    padding-top:8px;
    line-height:14px;
}
.report.wave{
    grid-template-columns:462px 1fr;
    height:104px;
    border-color:#999;
    line-height:13px;
}
.report.wave h3,.report.wave pre{
    border-color:#aaa;
}
.report.wave .bottom{
    padding-left:44px;
    line-height:14px;
}
.report .marker{
    position:absolute;
    background:#ebf95a;
    mix-blend-mode:multiply;
}
.spot .marker{
    left:0;
    top:53px;
    width:164px;
    height:37px;
}
.wave .marker{
    left:2px;
    top:40px;
    width:335px;
    height:28px;
}

/* structural data */
.win-data .titlebar{
    border-color:#a9bdd6;
    background:linear-gradient(90deg,rgba(255,255,255,0) 55%,#fbfbfd),linear-gradient(#d5e4fa,#bad7fd);
}
.win-data h2{
    margin-left:5px;
}
.databar{
    display:flex;
    align-items:center;
    height:44px;
    padding:0 7px;
    border-bottom:2px solid #b4b7ba;
    background:linear-gradient(#fff,#f5f5f6);
}
.databar .sep{
    margin:0 2px;
}
.props{
    display:flex;
    align-items:center;
    height:41px;
    padding-left:3px;
    border-bottom:2px solid #a5a8ad;
    background:linear-gradient(#d9dce0,#bbbec5);
}
.props strong{
    margin:0 7px;
}
.props strong + strong{
    margin-right:0;
}
.round{
    width:36px;
    height:36px;
    margin-right:4px;
    border:1px solid #a0a0a0;
    border-radius:50%;
}
.round svg{
    display:block;
}
.round.open{
    margin-right:0;
    background:#fff;
}
.grid{
    position:relative;
    margin:0 6px;
    border:2px solid #7590ad;
    border-radius:9px;
}
.grid table{
    width:100%;
    table-layout:fixed;
    border-spacing:0;
    font-size:20px;
    line-height:28px;
    border-radius:7px;
    overflow:hidden;
    background:#c6efce;
}
.c-head{
    width:14px;
}
.c-num{
    width:89px;
}
.c-mid{
    width:180px;
}
.c-check{
    width:216px;
}
th{
    height:35px;
    font-weight:700;
    white-space:nowrap;
    border-right:2px solid #a0a5ab;
    background:linear-gradient(#d6d9de,#bcbfc6);
}
tbody th{
    height:28px;
}
td{
    height:28px;
    padding:0 3px;
    border-right:2px solid #cbcbcb;
}
th:last-child,td:last-child{
    border-right:0;
}
td.current{
    color:#fff;
    background:#000;
    border-color:#000;
}
td.check{
    text-align:center;
    line-height:0;
}
td input{
    appearance:none;
    width:22px;
    height:22px;
    border:2px solid #707070;
    background:#fff;
}
td input:checked::after{
    content:"";
    display:block;
    width:7px;
    height:13px;
    margin:0 0 0 6px;
    border:solid #222;
    border-width:0 3px 3px 0;
    transform:rotate(40deg);
}
.highlight{
    position:absolute;
    right:24px;
    top:-11px;
    width:434px;
    height:91px;
    border:3px solid #ff4343;
    box-shadow:1px 4px 4px rgba(0,0,0,.4),inset 1px 4px 4px rgba(0,0,0,.4);
}
.cursor{
    position:absolute;
    left:1070px;
    bottom:0;
    width:16px;
    height:36px;
}
```
FILE: plots.js
```js
var NS="http://www.w3.org/2000/svg",
    colors=[[184,0,0],[242,0,0],[240,160,0],[220,240,0],[180,255,0],[128,255,0],[60,248,0],[0,230,100],[0,180,180],[0,110,220],[45,10,190]];

//color for a value between 0 (top of the scale) and 1
function color(v){
    var p=Math.min(Math.max(v,0),1)*10,
        i=Math.min(Math.floor(p),9),
        f=p-i;
    return "rgb("+colors[i].map(function(c,k){
        return Math.round(c+(colors[i+1][k]-c)*f);
    }).join(",")+")";
}
function add(parent,name,attrs,text){
    var el=document.createElementNS(NS,name);
    for(var k in attrs){
        el.setAttribute(k,attrs[k]);
    }
    if(text){
        el.textContent=text;
    }
    parent.appendChild(el);
    return el;
}

//false color map of n x n cells
function drawMap(id,x,y,size,n,edge,power){
    var g=document.getElementById(id),
        cell=size/n;
    add(g,"rect",{x:x,y:y,width:size,height:size,fill:color(1),stroke:"#000","stroke-width":2});
    var cells=add(g,"g",{"shape-rendering":"crispEdges"});
    for(var r=0;r<n;r++){
        for(var c=0;c<n;c++){
            var dx=(c+.5)/n*2-1,
                dy=(r+.5)/n*2-1,
                d=Math.sqrt(dx*dx+dy*dy)/edge;
            if(d<1){
                add(cells,"rect",{x:x+c*cell,y:y+r*cell,width:cell,height:cell,fill:color(Math.pow(d,power))});
            }
        }
    }
    for(var t=0;t<=10;t++){
        add(g,"rect",{x:x+t*size/10-.5,y:y+size,width:1,height:2,fill:"#ccc"});
        add(g,"rect",{x:x-2,y:y+t*size/10-.5,width:2,height:1,fill:"#ccc"});
    }
}

function drawBar(id,x,y,w,h,labels){
    var g=document.getElementById(id);
    for(var i=0;i<h;i++){
        add(g,"rect",{x:x,y:y+i,width:w,height:1,fill:color(i/(h-1))});
    }
    add(g,"path",{d:"M"+x+" "+y+"h"+w+"M"+x+" "+(y+h)+"h"+w,stroke:"#333"});
    labels.forEach(function(s,k){
        add(g,"text",{x:x+w+3,y:Math.round(y+h*k/10+5)},s);
    });
}

drawMap("waveMap",145,37,292,128,.995,2);
drawBar("waveBar",452,53,27,216,["0.00","-0.21","-0.41","-0.62","-0.82","-1.03","-1.23","-1.44","-1.64","-1.85","-2.05"]);
drawMap("sagMap",134,35,270,65,.975,4);
drawBar("sagBar",418,70,25,200,["5.82E-004","4.10E-004","2.39E-004","6.83E-005","-1.03E-004","-2.74E-004","-4.45E-004","-6.16E-004","-7.87E-004","-9.58E-004","-1.13E-003"]);

//rays through the lens to the focus
var rays=document.getElementById("rays");
for(var i=-7;i<=7;i++){
    var h=i*6.2;
    add(rays,"path",{d:"M35 "+(250+h)+"H128L154 "+(250+h*.985)+"L655 250"});
}
add(rays,"path",{d:"M505 240L530 238.500L640 247.500V252.500L530 261.500L505 260z",fill:"#00f",stroke:"#00f"});
add(rays,"path",{d:"M635 250h24"});

//spots, fixed seed so that every load gives the same pattern
var seed=7;
function rnd(){
    seed=(seed*16807)%2147483647;
    return seed/2147483647;
}
var d="";
for(var s=0;s<10500;s++){
    var a=rnd()*Math.PI*2,
        r=Math.sqrt(rnd())*73+(rnd()+rnd()+rnd()-1.5)*6,
        w=rnd()<.5?1:2;
    d+="M"+Math.round(343+r*Math.cos(a))+" "+Math.round(220+r*Math.sin(a))+"h"+w+"v1h-"+w+"z";
}
document.getElementById("spots").setAttribute("d",d);
```
